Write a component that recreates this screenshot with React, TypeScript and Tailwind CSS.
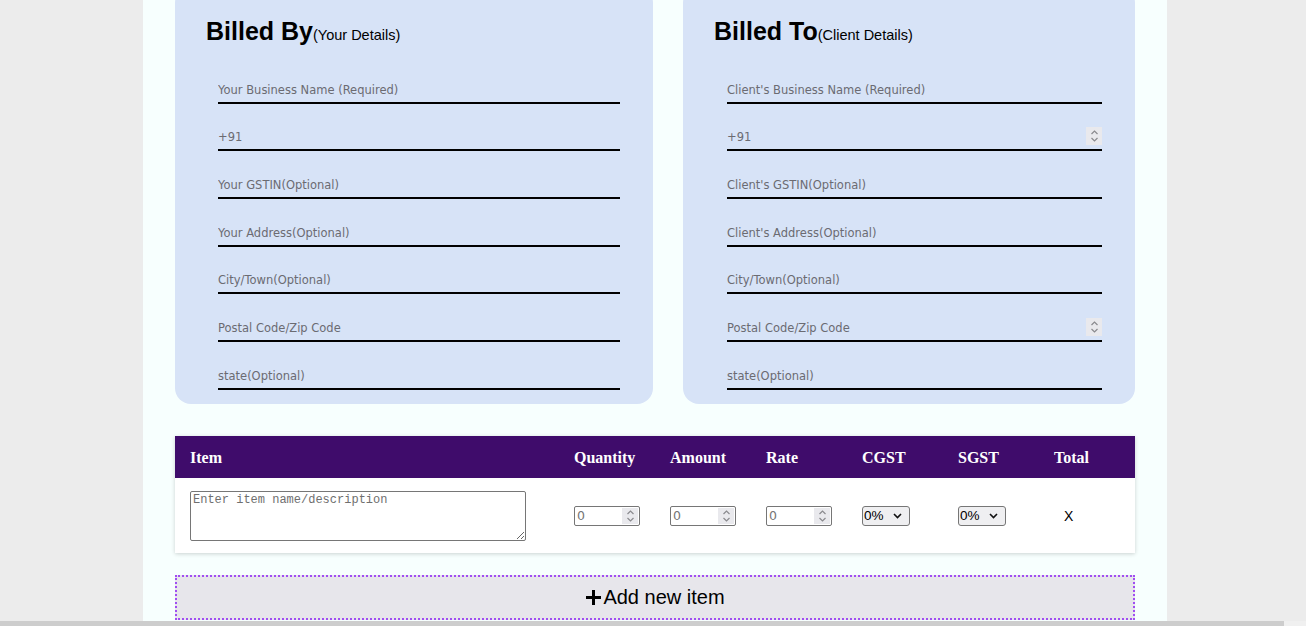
import React from "react";

const Spinner = ({ h = 18 }: { h?: number }) => (
  <div className="flex w-[16px] flex-col items-center justify-center bg-[#e9e9ed]" style={{ height: h }}>
    <svg width="9" height="14" viewBox="0 0 9 14" fill="none" stroke="#8a8a8e" strokeWidth="1.2">
      <path d="M1.5 5 L4.5 2 L7.5 5" />
      <path d="M1.5 9 L4.5 12 L7.5 9" />
    </svg>
  </div>
);

const Field = ({ ph, spin = false }: { ph: string; spin?: boolean }) => (
  <div className="flex h-[27.67px] items-center border-b-2 border-black">
    <input
      type="text"
      placeholder={ph}
      className="h-full min-w-0 flex-1 bg-transparent pl-0 pt-[2px] text-[11.5px] text-black outline-none placeholder:text-[#6b6b72]"
      style={{ fontFamily: "'DejaVu Sans', sans-serif" }}
    />
    {spin && <Spinner />}
  </div>
);

const Card = ({
  title,
  sub,
  fields,
  width,
  spins,
  pl,
}: {
  title: string;
  sub: string;
  fields: string[];
  width: string;
  spins: number[];
  pl: string;
}) => (
  <div className={`${width} rounded-[16px] bg-[#d7e3f7] pb-[14px] pt-[30px]`}>
    <div className="pl-[31px] leading-[29px]" style={{ fontFamily: "'Liberation Sans', Arial, sans-serif" }}>
      <span className="text-[25px] font-bold text-black">{title}</span>
      <span className="text-[14.5px] text-black">{sub}</span>
    </div>
    <div className={`mt-[26px] flex flex-col gap-[20px] ${pl} pr-[33px]`}>
      {fields.map((f, i) => (
        <Field key={f} ph={f} spin={spins.includes(i)} />
      ))}
    </div>
  </div>
);

const NumBox = () => (
  <div className="flex h-[20px] w-[66px] items-center rounded-[2px] border border-[#767676] bg-white pr-[1px]">
    <span
      className="flex-1 pl-[2px] text-[12.5px] leading-none text-[#757575]"
      style={{ fontFamily: "'DejaVu Sans', sans-serif" }}
    >
      0
    </span>
    <Spinner h={16} />
  </div>
);

const SelBox = () => (
  <div
    className="flex h-[20px] w-[48px] items-center justify-between rounded-[3px] border border-[#767676] bg-[#efeff1] pl-[1px] pr-[7px] text-[13.5px] text-black"
    style={{ fontFamily: "'Liberation Sans', Arial, sans-serif" }}
  >
    <span>0%</span>
    <svg width="9" height="6" viewBox="0 0 9 6" fill="none" stroke="#111" strokeWidth="1.6">
      <path d="M1 1 L4.5 4.5 L8 1" />
    </svg>
  </div>
);

export default function App() {
  const serif = { fontFamily: "'Liberation Serif', 'Times New Roman', serif" };
  return (
    <div className="flex h-[626px] w-[1306px] flex-col overflow-hidden bg-[#ececec]">
      <div className="flex-1 overflow-hidden">
        <div className="ml-[143px] flex h-full w-[1024px] flex-col bg-[#f7fffe] px-[32px]">
          <div className="-mt-[13px] flex gap-[30px]">
            <Card
              title="Billed By"
              sub="(Your Details)"
              width="w-[478px]"
              pl="pl-[43px]"
              spins={[]}
              fields={[
                "Your Business Name (Required)",
                "+91",
                "Your GSTIN(Optional)",
                "Your Address(Optional)",
                "City/Town(Optional)",
                "Postal Code/Zip Code",
                "state(Optional)",
              ]}
            />
            <Card
              title="Billed To"
              sub="(Client Details)"
              width="w-[452px]"
              pl="pl-[44px]"
              spins={[1, 5]}
              fields={[
                "Client's Business Name (Required)",
                "+91",
                "Client's GSTIN(Optional)",
                "Client's Address(Optional)",
                "City/Town(Optional)",
                "Postal Code/Zip Code",
                "state(Optional)",
              ]}
            />
          </div>

          <div className="mt-[32px] shadow-[0_1px_4px_rgba(0,0,0,0.18)]">
            <div
              className="flex h-[42px] items-center bg-[#3f0c6b] pt-[3px] text-[16px] font-bold text-white"
              style={serif}
            >
              <div className="w-[384px] pl-[15px]">Item</div>
              {["Quantity", "Amount", "Rate", "CGST", "SGST", "Total"].map((h) => (
                <div key={h} className="w-[96px] pl-[15px]">
                  {h}
                </div>
              ))}
            </div>
            <div className="flex h-[75px] items-center bg-white pt-[2px]">
              <div className="w-[384px] pl-[15px]">
                <textarea
                  placeholder="Enter item name/description"
                  className="block h-[50px] w-[336px] rounded-[2px] border border-[#767676] px-[2px] py-[1px] text-[12px] leading-[15px] outline-none placeholder:text-[#6f6f6f]"
                  style={{ fontFamily: "'Liberation Mono', 'DejaVu Sans Mono', monospace" }}
                />
              </div>
              <div className="w-[96px] pl-[15px]">
                <NumBox />
              </div>
              <div className="w-[96px] pl-[15px]">
                <NumBox />
              </div>
              <div className="w-[96px] pl-[15px]">
                <NumBox />
              </div>
              <div className="w-[96px] pl-[15px]">
                <SelBox />
              </div>
              <div className="w-[96px] pl-[15px]">
                <SelBox />
              </div>
              <div
                className="w-[96px] pl-[25px] text-[14px] text-black"
                style={{ fontFamily: "'Liberation Sans', Arial, sans-serif" }}
              >
                X
              </div>
            </div>
          </div>

          <div
            className="mt-[22px] flex h-[45px] shrink-0 items-center justify-center border-2 border-dotted border-[#a04ef2] bg-[#e7e6eb] text-[20px] text-black"
            style={{ fontFamily: "'Liberation Sans', Arial, sans-serif" }}
          >
            <svg width="17" height="17" viewBox="0 0 17 17" className="mr-[1px]">
              <path d="M8.5 1 V16 M1 8.5 H16" stroke="#000" strokeWidth="3" />
            </svg>
            <span>Add new item</span>
          </div>
        </div>
      </div>
      <div className="flex h-[5px]">
        <div className="w-[1284px] bg-[#cdcdcd]" />
        <div className="flex-1 bg-[#f0f0f0]" />
      </div>
    </div>
  );
}
